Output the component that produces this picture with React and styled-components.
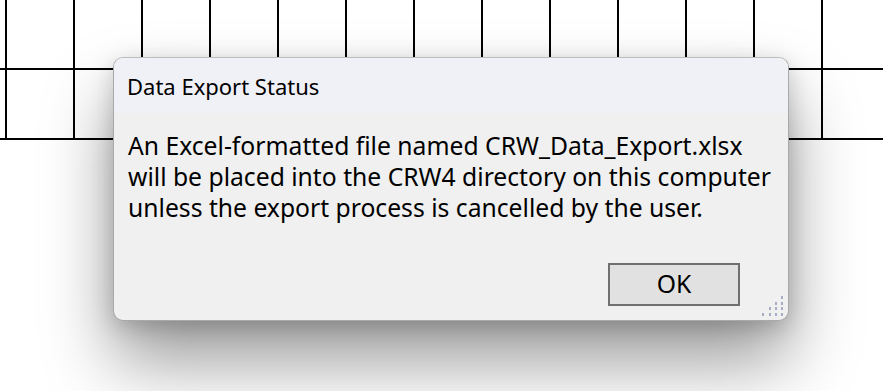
import React from "react";
import styled, { createGlobalStyle } from "styled-components";

const Global = createGlobalStyle`
  html, body { margin: 0; padding: 0; background: #ffffff; }
  body { font-family: "Noto Sans", "Open Sans", sans-serif; }
`;

const Page = styled.div`
  position: relative;
  width: 883px;
  height: 391px;
  overflow: hidden;
  background: #ffffff;
`;

const Grid = styled.div`
  display: grid;
  grid-template-columns: repeat(15, 68px);
  grid-auto-rows: 70px;
  margin-left: -61px;
  width: max-content;
`;

const Cell = styled.div`
  box-sizing: border-box;
  border-right: 2px solid #000;
  border-bottom: 2px solid #000;
`;

const Dialog = styled.div`
  position: absolute;
  left: 113px;
  top: 57px;
  width: 676px;
  height: 264px;
  box-sizing: border-box;
  display: flex;
  flex-direction: column;
  border: 1px solid #a9a9a9;
  border-top-color: #bdbdbd;
  border-radius: 10px;
  background: #f0f0f0;
  overflow: hidden;
  box-shadow: 0 40px 70px rgba(0, 0, 0, 0.4), 0 6px 22px rgba(0, 0, 0, 0.18);
`;

const TitleBar = styled.div`
  height: 55px;
  flex: none;
  display: flex;
  align-items: center;
  padding-left: 13px;
  background: #f0f1f6;
  font-size: 22px;
  color: #000;
`;

const Body = styled.div`
  flex: 1;
  display: flex;
  flex-direction: column;
  padding: 17px 48px 14px 14px;
  position: relative;
`;

const Message = styled.p`
  margin: 0;
  font-size: 24.7px;
  line-height: 31px;
  color: #000;
  white-space: pre;
`;

const Actions = styled.div`
  margin-top: auto;
  display: flex;
  justify-content: flex-end;
`;

const Button = styled.button`
  width: 132px;
  height: 43px;
  box-sizing: border-box;
  border: 2px solid #707070;
  background: #e1e1e1;
  font-family: "Noto Sans", "Open Sans", sans-serif;
  font-size: 24.7px;
  line-height: 1;
  color: #000;
  padding: 0;
  border-radius: 0;
`;

const Grip = styled.svg`
  position: absolute;
  right: 3px;
  bottom: 3px;
`;

function ResizeGrip() {
  const dots = [];
  const xs = [1, 8, 14, 20];
  const ys = [1, 7, 12, 18];
  for (let r = 0; r < 4; r++) {
    for (let c = 3 - r; c < 4; c++) {
      dots.push(<rect key={`${r}-${c}`} x={xs[c]} y={ys[r]} width="2" height="3" fill="#a7aec4" />);
    }
  }
  return (
    <Grip width="24" height="22" viewBox="0 0 24 22">
      {dots}
    </Grip>
  );
}

export default function App() {
  const cells = Array.from({ length: 30 });
  return (
    <Page>
      <Global />
      <Grid>
        {cells.map((_, i) => (
          <Cell key={i} />
        ))}
      </Grid>
      <Dialog>
        <TitleBar>Data Export Status</TitleBar>
        <Body>
          <Message>
            {"An Excel-formatted file named CRW_Data_Export.xlsx\nwill be placed into the CRW4 directory on this computer\nunless the export process is cancelled by the user."}
          </Message>
          <Actions>
            <Button>OK</Button>
          </Actions>
          <ResizeGrip />
        </Body>
      </Dialog>
    </Page>
  );
}
